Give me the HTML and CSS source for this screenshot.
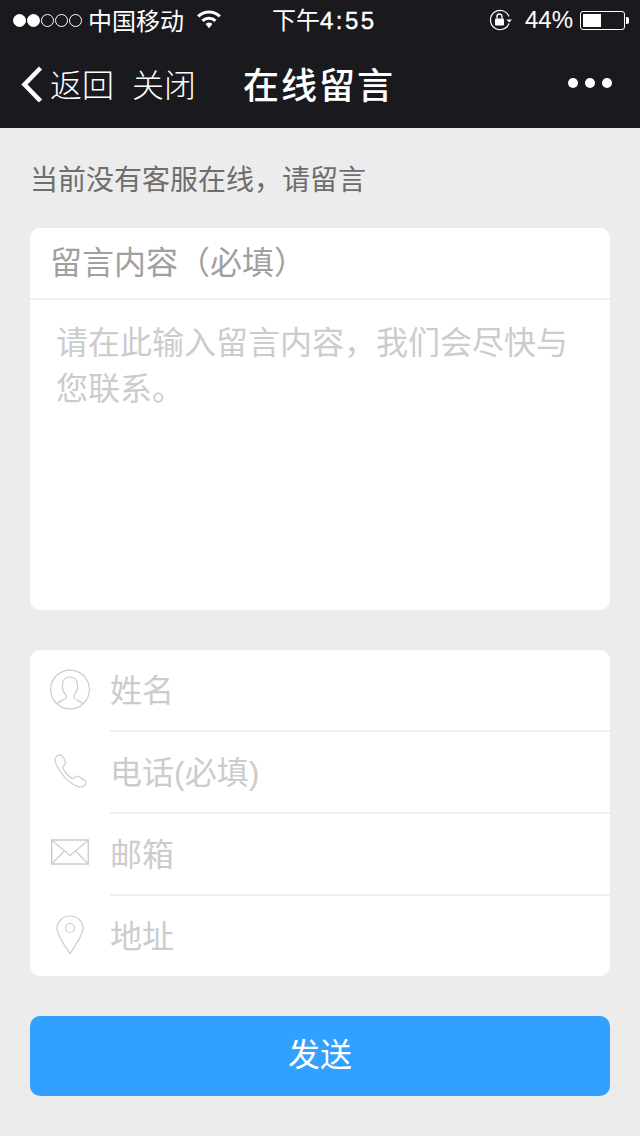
FILE: index.html
```html
<!DOCTYPE html>
<html lang="zh-CN">
<head>
    <meta charset="UTF-8">
    <meta name="viewport" content="width=device-width, initial-scale=1.0">
    <title>在线留言</title>
    <link rel="stylesheet" href="styles.css">
</head>
<body>
    <div class="status-bar">
        <div class="status-left">
            <div class="signal">
                <i class="dot on"></i><i class="dot on"></i><i class="dot"></i><i class="dot"></i><i class="dot"></i>
            </div>
            <span class="carrier">中国移动</span>
            <svg class="wifi" width="26" height="22" viewBox="0 0 24 20">
                <path d="M1 6.500 A16 16 0 0 1 23 6.500 L21 8.600 A13 13 0 0 0 3 8.600 Z" fill="#fff"/>
                <path d="M5 10.600 A10.500 10.500 0 0 1 19 10.600 L17 12.700 A7.500 7.500 0 0 0 7 12.700 Z" fill="#fff"/>
                <path d="M8.800 14.500 A5 5 0 0 1 15.200 14.500 L12 18.500 Z" fill="#fff"/>
            </svg>
        </div>
        <span class="clock">下午<b>4:55</b></span>
        <div class="status-right">
            <svg class="lock" width="24" height="22" viewBox="0 0 24 22">
                <path d="M20 7.500 A9.600 9.600 0 1 0 20 14.500" fill="none" stroke="#fff" stroke-width="1.200"/>
                <path d="M17.500 10.500 H23 L20.200 13.500 Z" fill="#fff"/>
                <rect x="6" y="9.500" width="9" height="7" rx="1" fill="#fff"/>
                <path d="M8 9.500 V7.500 A2.500 2.500 0 0 1 13 7.500 V9.500" fill="none" stroke="#fff" stroke-width="1.400"/>
            </svg>
            <span class="percent">44%</span>
            <div class="battery"><div class="battery-level"></div></div>
            <div class="battery-tip"></div>
        </div>
    </div>

    <div class="nav-bar">
        <svg class="back-icon" width="24" height="38" viewBox="0 0 24 38">
            <path d="M20.500 4 L4.500 20.500 L20.500 37" fill="none" stroke="#fff" stroke-width="4.500"/>
        </svg>
        <span class="nav-link">返回</span>
        <span class="nav-link close-link">关闭</span>
        <span class="nav-title">在线留言</span>
        <div class="more">
            <i></i><i></i><i></i>
        </div>
    </div>

    <div class="content">
        <p class="notice">当前没有客服在线，请留言</p>

        <div class="card message-card">
            <div class="message-title">留言内容（必填）</div>
            <div class="message-body">请在此输入留言内容，我们会尽快与您联系。</div>
        </div>

        <div class="card">
            <div class="field">
                <svg class="field-icon" width="40" height="40" viewBox="0 0 40 40">
                    <circle cx="20" cy="18.500" r="19.400" fill="none" stroke="#ccc" stroke-width="1.200"/>
                    <path d="M7 33 C9 30 14 29.500 16 27 C16.800 25.500 16.500 24.500 15.500 23.500 C13 20.500 12 17 12.500 13 C13 8.500 16 6 20 6 C24 6 27 8.500 27.500 13 C28 17 27 20.500 24.500 23.500 C23.500 24.500 23.200 25.500 24 27 C26 29.500 31 30 33 33" fill="none" stroke="#ccc" stroke-width="1.200"/>
                </svg>
                <div class="field-text">姓名</div>
            </div>
            <div class="field">
                <svg class="field-icon" width="40" height="40" viewBox="0 0 40 40">
                    <path d="M6 4 C8 2 10 1.500 11.500 2.500 C13 3.500 15 7.500 15.500 10 C15.800 11.500 13.500 12.500 13 13.500 C12.500 14.500 14 17.500 16.500 20.500 C19 23.500 22 25.500 23.500 25.500 C25 25 25.500 23 27 23 C29 23.500 34 26.500 35.500 28 C36.500 29.500 36 31 34.500 32.500 C32.500 34.500 29.500 34.500 26.500 33 C20.500 30.500 15 25.500 11 19.500 C8 15 5 10.500 5 7.500 C5 6 5.200 5 6 4 Z" fill="none" stroke="#ccc" stroke-width="1.200"/>
                </svg>
                <div class="field-text">电话(必填)</div>
            </div>
            <div class="field">
                <svg class="field-icon" width="40" height="40" viewBox="0 0 40 40">
                    <rect x="1.700" y="5" width="36.600" height="24" fill="none" stroke="#ccc" stroke-width="1.500"/>
                    <path d="M2 5.500 L20 20.500 L38 5.500 M2 28.500 L14.500 16 M38 28.500 L25.500 16" fill="none" stroke="#ccc" stroke-width="1.200"/>
                </svg>
                <div class="field-text">邮箱</div>
            </div>
            <div class="field">
                <svg class="field-icon" width="40" height="40" viewBox="0 0 40 40">
                    <path d="M20 37.500 C15 30 7 19.500 7 12.500 C7 5 13 0 20 0 C27 0 33 5 33 12.500 C33 19.500 25 30 20 37.500 Z" fill="none" stroke="#ccc" stroke-width="1.200"/>
                    <circle cx="20" cy="12" r="4.500" fill="none" stroke="#ccc" stroke-width="1.200"/>
                </svg>
                <div class="field-text">地址</div>
            </div>
        </div>

        <button class="send-button">发送</button>
    </div>
</body>
</html>
```

FILE: styles.css
```css
* {
    box-sizing: border-box;
}
body {
    font-family: "Liberation Sans", "Noto Sans CJK SC", sans-serif;
    margin: 0;
    padding: 0;
    width: 640px;
    height: 1136px;
    overflow: hidden;
    background-color: #ececec;
}
.status-bar {
    height: 40px;
    background-color: #1a1a1e;
    color: #fff;
    font-size: 24px;
    display: flex;
    align-items: center;
    justify-content: space-between;
    padding: 0 11px 0 13px;
    position: relative;
}
.status-left, .status-right {
    display: flex;
    align-items: center;
}
.signal {
    display: flex;
    gap: 1px;
    margin-right: 6px;
}
.dot {
    width: 13px;
    height: 13px;
    border-radius: 50%;
    border: 1px solid #fff;
}
.dot.on {
    background-color: #fff;
}
.carrier {
    margin-top: -2px;
}
.wifi {
    margin-left: 12px;
    margin-bottom: 2px;
}
.clock {
    position: absolute;
    left: 272px;
    top: 5px;
    line-height: 32px;
}
.clock b {
    font-weight: 400;
    letter-spacing: 2.500px;
    -webkit-text-stroke: 0.400px #fff;
}
.lock {
    margin-right: 12px;
}
.percent {
    margin-right: 7px;
}
.battery {
    width: 45px;
    height: 19px;
    border: 1px solid #fff;
    border-radius: 3px;
    padding: 2px;
}
.battery-level {
    width: 18px;
    height: 100%;
    background-color: #fff;
}
.battery-tip {
    width: 3px;
    height: 7px;
    background-color: #fff;
    border-radius: 0 2px 2px 0;
    margin-left: 1px;
}
.nav-bar {
    height: 88px;
    background-color: #1a1a1e;
    color: #fff;
    display: flex;
    align-items: center;
    padding: 0 20px 2px;
    position: relative;
}
.back-icon {
    margin-right: 6px;
}
.nav-link {
    font-size: 32px;
    font-weight: 300;
}
.close-link {
    margin-left: 18px;
}
.nav-title {
    font-size: 36px;
    font-weight: 500;
    letter-spacing: 2px;
    margin-left: 47px;
}
.more {
    display: flex;
    gap: 7px;
    margin-left: auto;
    margin-right: 8px;
}
.more i {
    width: 10px;
    height: 10px;
    border-radius: 50%;
    background-color: #fff;
}
.content {
    padding: 0 30px;
}
.notice {
    margin: 0;
    padding-top: 32px;
    height: 100px;
    font-size: 28px;
    line-height: 42px;
    color: #6e6e6e;
}
.card {
    background-color: #fff;
    border-radius: 10px;
}
.message-card {
    height: 382px;
    margin-bottom: 40px;
}
.message-title {
    height: 72px;
    padding-left: 20px;
    font-size: 32px;
    line-height: 70px;
    color: #a0a0a0;
    border-bottom: 2px solid #f0f0f0;
}
.message-body {
    padding: 20px 26px;
    font-size: 32px;
    line-height: 46px;
    color: #ccc;
}
.field {
    height: 82px;
    display: flex;
    align-items: center;
    padding-left: 20px;
}
.field:last-child {
    height: 80px;
}
.field-icon {
    flex-shrink: 0;
    overflow: visible;
}
.field-text {
    flex-grow: 1;
    height: 100%;
    margin-left: 20px;
    font-size: 32px;
    line-height: 82px;
    color: #ccc;
    border-bottom: 2px solid #f0f0f0;
}
.field:last-child .field-text {
    border-bottom: none;
}
.send-button {
    display: block;
    width: 100%;
    height: 80px;
    margin-top: 40px;
    padding-bottom: 9px;
    border: none;
    border-radius: 10px;
    background-color: #31a0ff;
    color: #fff;
    font-family: inherit;
    font-size: 32px;
    cursor: pointer;
}
```
